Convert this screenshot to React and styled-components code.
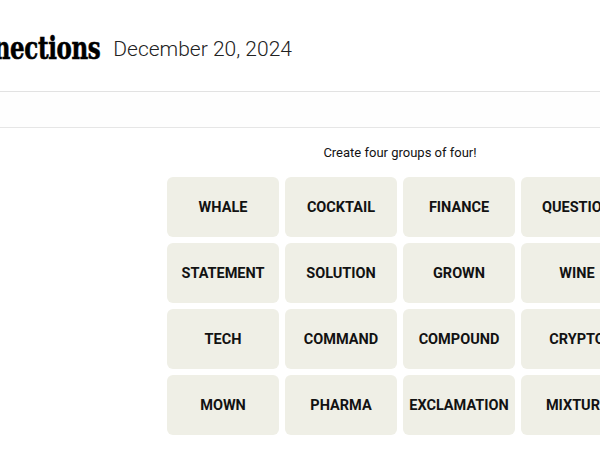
import React from "react";
import styled, { createGlobalStyle } from "styled-components";

const Global = createGlobalStyle`
  html, body { margin: 0; padding: 0; background: #fff; overflow: hidden; }
  body { width: 600px; height: 450px; }
`;

const Page = styled.div`
  width: 800px;
  display: flex;
  flex-direction: column;
`;

const Header = styled.header`
  display: flex;
  align-items: center;
  gap: 13px;
  border-bottom: 1px solid #e2e2e2;
  box-sizing: border-box;
  height: 92px;
  padding-top: 4px;
`;

const Title = styled.h1`
  margin: 0 0 0 -110px;
  font-family: "DejaVu Serif", serif;
  font-weight: 700;
  font-size: 31px;
  letter-spacing: -0.5px;
  color: #000;
  -webkit-text-stroke: 0.6px #000;
  transform: scaleX(0.74);
  transform-origin: right center;
`;

const DateText = styled.span`
  font-family: "Roboto", sans-serif;
  font-weight: 300;
  font-size: 21px;
  color: #222;
  padding-top: 3px;
`;

const Toolbar = styled.div`
  height: 36px;
  box-sizing: border-box;
  border-bottom: 1px solid #e6e6e6;
  background: #fefefe;
`;

const Main = styled.main`
  display: flex;
  flex-direction: column;
  align-items: center;
  padding-top: 17px;
`;

const Subtitle = styled.p`
  margin: 0 0 16px;
  font-family: "Roboto", sans-serif;
  font-size: 13px;
  color: #121212;
  line-height: 16px;
`;

const Board = styled.div`
  display: grid;
  grid-template-columns: repeat(4, 112px);
  grid-auto-rows: 60px;
  gap: 6px;
`;

const Tile = styled.button`
  border: none;
  border-radius: 6px;
  background: #efefe6;
  font-family: "Roboto", sans-serif;
  font-weight: 700;
  font-size: 14.5px;
  color: #121212;
  text-transform: uppercase;
  display: flex;
  align-items: center;
  justify-content: center;
  padding: 0;
  white-space: nowrap;
`;

const words = [
  "Whale", "Cocktail", "Finance", "Question",
  "Statement", "Solution", "Grown", "Wine",
  "Tech", "Command", "Compound", "Crypto",
  "Mown", "Pharma", "Exclamation", "Mixture",
];

export default function App() {
  return (
    <>
      <Global />
      <Page>
        <Header>
          <Title>Connections</Title>
          <DateText>December 20, 2024</DateText>
        </Header>
        <Toolbar />
        <Main>
          <Subtitle>Create four groups of four!</Subtitle>
          <Board>
            {words.map((w) => (
              <Tile key={w}>{w}</Tile>
            ))}
          </Board>
        </Main>
      </Page>
    </>
  );
}
